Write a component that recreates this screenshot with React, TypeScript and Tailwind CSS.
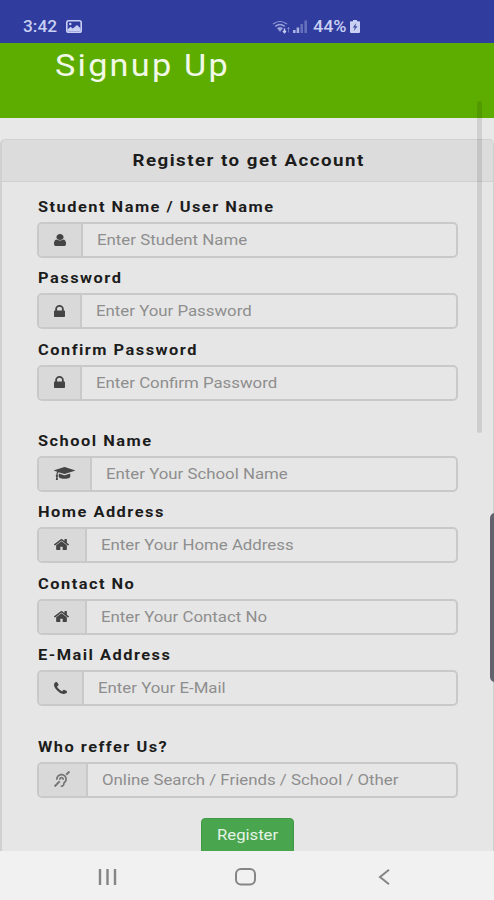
import React from 'react';
import { FaDeaf } from 'react-icons/fa';

const icons = {
  user: {
    box: "256 128 1280 1536",
    d: "M1536 1399q0 109-62.5 187t-150.5 78h-854q-88 0-150.5-78t-62.5-187q0-85 8.5-160.5t31.5-152 58.5-131 94-89 134.5-34.5q131 128 313 128t313-128q76 0 134.5 34.5t94 89 58.5 131 31.5 152 8.5 160.5zm-256-887q0 159-112.5 271.5t-271.5 112.5-271.5-112.5-112.5-271.5 112.5-271.5 271.5-112.5 271.5 112.5 112.5 271.5z",
  },
  lock: {
    box: "320 128 1152 1408",
    d: "M640 768h512v-192q0-106-75-181t-181-75-181 75-75 181v192zm832 96v576q0 40-28 68t-68 28h-960q-40 0-68-28t-28-68v-576q0-40 28-68t68-28h32v-192q0-184 132-316t316-132 316 132 132 316v192h32q40 0 68 28t28 68z",
  },
  cap: {
    box: "0 128 2304 1408",
    d: "M1774 836l18 316q4 69-82 128t-235 93.5-323 34.5-323-34.5-235-93.5-82-128l18-316 574 181q22 7 48 7t48-7zm530-324q0 23-22 31l-1120 352q-4 1-10 1t-10-1l-652-206q-43 34-71 111.5t-34 178.5q63 36 63 109 0 69-58 107l58 433q2 14-8 25-9 11-24 11h-192q-15 0-24-11-10-11-8-25l58-433q-58-38-58-107 0-73 65-111 11-207 98-330l-333-104q-22-8-22-31t22-31l1120-352q4-1 10-1t10 1l1120 352q22 8 22 31z",
  },
  home: {
    box: "88 250 1616 1290",
    d: "M1472 992v480q0 26-19 45t-45 19h-384v-384h-256v384h-384q-26 0-45-19t-19-45v-480q0-1 .5-3t.5-3l575-474 575 474q1 2 1 6zm223-69l-62 74q-8 9-21 11h-3q-13 0-21-7l-692-577-692 577q-12 8-24 7-13-2-21-11l-62-74q-8-10-7-23.5t11-21.5l719-599q32-26 76-26t76 26l244 204v-195q0-14 9-23t23-9h192q14 0 23 9t9 23v408l219 182q10 8 11 21.5t-7 23.5z",
  },
  phone: {
    box: "192 128 1408 1408",
    d: "M1600 1240q0 27-10 70.5t-21 68.5q-21 50-122 106-94 51-186 51-27 0-53-3.5t-57.5-12.5-47-14.5-55.5-20.5-49-18q-98-35-175-83-127-79-264-216t-216-264q-48-77-83-175-3-9-18-49t-20.5-55.5-14.5-47-12.5-57.5-3.5-53q0-92 51-186 56-101 106-122 25-11 68.5-21t70.5-10q14 0 21 3 18 6 53 76 11 19 30 54t35 63.5 31 53.5q3 4 17.5 25t21.5 35.5 7 28.5q0 20-28.5 50t-62 55-62 53-28.5 46q0 9 5 22.5t8.5 20.5 14 24 11.5 19q76 137 174 235t235 174q2 1 19 11.5t24 14 20.5 8.5 22.5 5q18 0 46-28.5t53-62 55-62 50-28.5q14 0 28.5 7t35.5 21.5 25 17.5q25 15 53.5 31t63.5 35 54 30q70 35 76 53 3 7 3 21z",
  },
};

const Glyph = ({ name, className }: { name: keyof typeof icons; className: string }) => (
  <svg viewBox={icons[name].box} preserveAspectRatio="none" fill="currentColor" className={className}>
    <path d={icons[name].d} />
  </svg>
);

const fields = [
  { label: "Student Name / User Name", hint: "Enter Student Name", addon: "w-[43.5px]", icon: <Glyph name="user" className="w-[12px] h-[12px]" /> },
  { label: "Password", hint: "Enter Your Password", addon: "w-[42.5px]", icon: <Glyph name="lock" className="w-[11px] h-[12px]" /> },
  { label: "Confirm Password", hint: "Enter Confirm Password", addon: "w-[42.5px]", gap: true, icon: <Glyph name="lock" className="w-[11px] h-[12px]" /> },
  { label: "School Name", hint: "Enter Your School Name", addon: "w-[53px]", icon: <Glyph name="cap" className="w-[21px] h-[13px]" /> },
  { label: "Home Address", hint: "Enter Your Home Address", addon: "w-[47.5px]", icon: <Glyph name="home" className="w-[15px] h-[11px]" /> },
  { label: "Contact No", hint: "Enter Your Contact No", addon: "w-[47.5px]", icon: <Glyph name="home" className="w-[15px] h-[11px]" /> },
  { label: "E-Mail Address", hint: "Enter Your E-Mail", addon: "w-[44.5px]", gap: true, icon: <Glyph name="phone" className="w-[13px] h-[12px]" /> },
  { label: "Who reffer Us?", hint: "Online Search / Friends / School / Other", addon: "w-[48.5px]", icon: <FaDeaf className="w-[16px] h-[16px] text-[#777777]" /> },
];

const StatusBar = () => (
  <div className="h-[43px] shrink-0 bg-[#303c9e] flex items-center pt-[10px] pl-[23px] text-[#c9d0f4]">
    <span className="w-[43px] pt-px text-[16px] leading-none font-medium whitespace-nowrap">
      <span className="inline-block origin-left scale-x-[1.08]">3:42</span>
    </span>
    <svg viewBox="0 0 16 13" className="w-[16px] h-[13px]">
      <rect x="0.8" y="0.8" width="14.4" height="11.4" rx="1.8" fill="none" stroke="currentColor" strokeWidth="1.6" />
      <path d="M1.5 11.5V9.5l3-2.7 2.3 1.8L11 5l3.5 3.2v3.3z" fill="currentColor" />
      <circle cx="4.3" cy="4" r="1.2" fill="currentColor" />
    </svg>
    <svg viewBox="0 0 20 14" className="w-[20px] h-[14px] ml-[190px]" fill="none" stroke="currentColor">
      <path d="M1 4Q8 -1 15 4" strokeWidth="1.1" opacity=".65" />
      <path d="M3.3 6.4Q8 2.8 12.7 6.4" strokeWidth="1.5" opacity=".7" />
      <path d="M5.3 8.2Q8 6.2 10.7 8.2L8 11.5z" fill="currentColor" opacity=".7" strokeWidth=".5" />
      <path d="M12.5 8.5v4M11 11l1.5 1.7L14 11" strokeWidth="1.4" />
      <path d="M16.5 7.5v5M15.3 9l1.2-1.5L17.7 9" strokeWidth="1" opacity=".4" />
    </svg>
    <svg viewBox="0 0 15 13" className="w-[15px] h-[13px] ml-[1px]" fill="currentColor">
      <rect x="0" y="10" width="2.6" height="3" opacity=".8" />
      <rect x="3.6" y="7.5" width="2.6" height="5.5" opacity=".8" />
      <rect x="7.4" y="4" width="2.6" height="9" opacity=".35" />
      <rect x="11.4" y="0.5" width="2.6" height="12.5" opacity=".35" />
    </svg>
    <span className="w-[37px] ml-[5px] pt-px text-[16px] leading-none font-medium whitespace-nowrap">
      <span className="inline-block origin-left scale-x-[1.12]">44%</span>
    </span>
    <svg viewBox="0 0 10 13" className="w-[10px] h-[13px]">
      <path d="M3 0h4v1.3h2.2q.8 0 .8.8V12q0 1-1 1H1q-1 0-1-1V2.1q0-.8.8-.8H3z" fill="currentColor" />
      <path d="M6.3 3L2.7 7.5h2L3.8 11l3.7-4.7H5.4z" fill="#47539f" />
    </svg>
  </div>
);

const NavBar = () => (
  <div className="h-[49px] shrink-0 bg-[#f1f1f1] flex items-center pl-[98px] pt-[3px] text-[#858585]">
    <svg viewBox="0 0 20 16" className="w-[20px] h-[16px]" stroke="currentColor" strokeWidth="2.4">
      <path d="M2 0v16M9.5 0v16M17 0v16" />
    </svg>
    <svg viewBox="0 0 21 18" className="w-[21px] h-[18px] ml-[117px]" fill="none" stroke="currentColor" strokeWidth="2">
      <rect x="1" y="1" width="19" height="15.5" rx="5" />
    </svg>
    <svg viewBox="0 0 12 16" className="w-[12px] h-[16px] ml-[122px]" fill="none" stroke="currentColor" strokeWidth="2">
      <path d="M11 .8L2 8l9 7.2" />
    </svg>
  </div>
);

const App = () => {
  return (
    <main className="relative w-[494px] h-[900px] overflow-hidden flex flex-col bg-[#e5e5e5] font-['Roboto',sans-serif]">
      <StatusBar />

      <div className="h-[75px] shrink-0 bg-[#5dac00] pl-[54.5px]">
        <h1 className="inline-block origin-left scale-x-[1.07] text-[32px] leading-[44px] tracking-[2.1px] text-[#f1f8e6] whitespace-nowrap">Signup Up</h1>
      </div>

      <div className="flex-1 min-h-0 overflow-hidden pt-[21px] bg-[#e8e8e8]">
        {/* Register Card */}
        <div className="h-[760px] border-l-2 border-r border-[#d0d0d0] rounded-t-[5px] bg-[#e6e6e6]">
          <div className="h-[43px] pl-[2px] bg-[#dcdcdc] border-y border-[#d0d0d0] rounded-t-[4px] text-center">
            <h2 className="inline-block scale-x-[1.1] text-[17px] leading-[41px] font-bold tracking-[1.35px] text-[#1c1c1c] whitespace-nowrap">Register to get Account</h2>
          </div>

          <form className="pl-[35px] pr-[35px] pt-[14px]">
            {fields.map((field, index) => (
              <div key={index} className={field.gap ? "h-[91.6px]" : "h-[71.3px]"}>
                <label className="block h-[26px] pl-[0.5px] pt-px text-[14.5px] leading-[22px] font-bold tracking-[1.32px] text-[#1c1c1c] whitespace-nowrap">
                  <span className="inline-block origin-left scale-x-[1.13]">{field.label}</span>
                </label>
                <div className="h-[36px] flex border-2 border-[#c9c9c9] rounded-[5px] overflow-hidden">
                  <div className={`${field.addon} shrink-0 bg-[#d9d9d9] border-r-2 border-[#c9c9c9] flex items-center justify-center pb-px text-[#444444]`}>
                    {field.icon}
                  </div>
                  <div className="pl-[14px] pt-px text-[14.5px] leading-[32px] text-[#8e8e8e] whitespace-nowrap">
                    <span className="inline-block origin-left scale-x-[1.16]">{field.hint}</span>
                  </div>
                </div>
              </div>
            ))}

            {/* Register Button */}
            <div className="flex justify-center pt-[11px]">
              <button type="button" className="w-[93px] h-[36px] bg-[#4aa64e] border border-[#419945] rounded-[4px] text-[14.5px] text-[#e6f3e6]">
                <span className="inline-block scale-x-[1.15]">Register</span>
              </button>
            </div>
          </form>
        </div>
      </div>

      <NavBar />

      {/* Scroll indicator and edge panel handle */}
      <div className="absolute left-[477px] top-[101px] w-[5px] h-[332px] rounded-full bg-black/10"></div>
      <div className="absolute left-[490px] top-[513px] w-[10px] h-[169px] rounded-[5px] bg-[#62626c]"></div>
    </main>
  );
};

export default App;
